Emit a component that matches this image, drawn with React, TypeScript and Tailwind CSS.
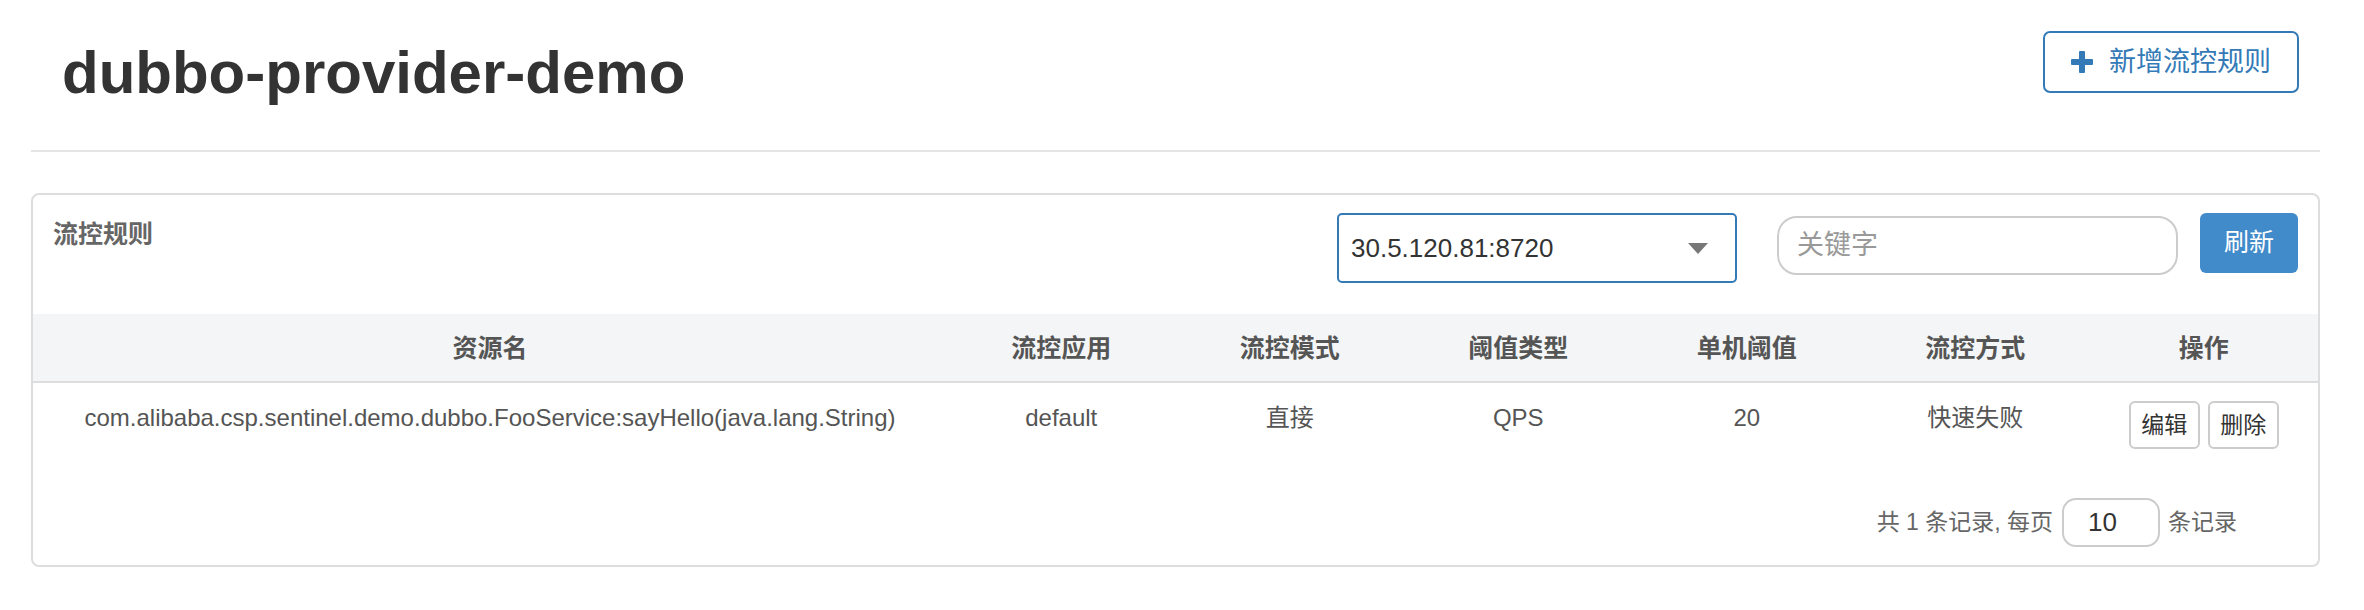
const columns = ["资源名", "流控应用", "流控模式", "阈值类型", "单机阈值", "流控方式", "操作"];

const rule = {
  resource: "com.alibaba.csp.sentinel.demo.dubbo.FooService:sayHello(java.lang.String)",
  app: "default",
  mode: "直接",
  grade: "QPS",
  count: "20",
  behavior: "快速失败",
};

const PlusIcon = () => (
  <svg width="22" height="22" viewBox="0 0 22 22" fill="#337ab7">
    <rect x="8" y="0" width="6" height="22" rx="1" />
    <rect x="0" y="8" width="22" height="6" rx="1" />
  </svg>
);

export default function App() {
  return (
    <div className="min-h-[610px] bg-white pl-[31px] pr-[44px] font-['Liberation_Sans','Noto_Sans_CJK_SC',sans-serif]">
      {/* page header */}
      <div className="h-[150px] flex justify-between items-start">
        <h1 className="mt-[43px] ml-[31px] text-[60px] leading-[60px] font-bold text-[#333]">
          dubbo-provider-demo
        </h1>
        <button className="mt-[31px] mr-[21px] h-[62px] w-[256px] border-2 border-[#337ab7] rounded-[7px] flex items-center justify-center gap-[16px] text-[27px] text-[#337ab7] bg-white">
          <PlusIcon />
          <span>新增流控规则</span>
        </button>
      </div>
      <div className="h-[2px] bg-[#e5e5e5]" />

      {/* rules card */}
      <div className="mt-[41px] border-2 border-[#ddd] rounded-[8px]">
        <div className="h-[119px] flex justify-between pl-[20px] pr-[20px]">
          <div className="mt-[24px] text-[25px] leading-[30px] font-bold text-[#666]">流控规则</div>
          <div className="flex items-start">
            <div className="mt-[18px] w-[400px] h-[70px] border-2 border-[#337ab7] rounded-[5px] flex items-center justify-between pl-[12px] pr-[27px] text-[26px] text-[#333]">
              <span>30.5.120.81:8720</span>
              <svg width="20" height="11" viewBox="0 0 20 11">
                <polygon points="0,0 20,0 10,11" fill="#777" />
              </svg>
            </div>
            <input
              type="text"
              placeholder="关键字"
              className="ml-[40px] mt-[21px] w-[401px] h-[59px] border-2 border-[#ccc] rounded-[20px] px-[18px] text-[27px] text-[#333] placeholder:text-[#999] outline-none"
            />
            <button className="ml-[22px] mt-[18px] w-[98px] h-[60px] rounded-[6px] bg-[#428bca] text-white text-[25px]">
              刷新
            </button>
          </div>
        </div>

        <div className="grid grid-cols-[914px_repeat(6,minmax(0,1fr))] h-[69px] pt-[3px] items-center bg-[#f4f5f7] border-b-2 border-[#ddd] text-center text-[25px] font-bold text-[#555]">
          {columns.map((c) => (
            <div key={c}>{c}</div>
          ))}
        </div>

        <div className="grid grid-cols-[914px_repeat(6,minmax(0,1fr))] h-[87px] items-start text-center text-[24px] leading-[28px] text-[#555]">
          <div className="pt-[21px]">{rule.resource}</div>
          <div className="pt-[21px]">{rule.app}</div>
          <div className="pt-[21px]">{rule.mode}</div>
          <div className="pt-[21px]">{rule.grade}</div>
          <div className="pt-[21px]">{rule.count}</div>
          <div className="pt-[21px]">{rule.behavior}</div>
          <div className="pt-[18px] flex justify-center gap-[8px]">
            <button className="w-[71px] h-[48px] border-2 border-[#ccc] rounded-[6px] bg-white text-[23px] text-[#333]">编辑</button>
            <button className="w-[71px] h-[48px] border-2 border-[#ccc] rounded-[6px] bg-white text-[23px] text-[#333]">删除</button>
          </div>
        </div>

        <div className="flex justify-end items-center pt-[28px] pb-[18px] pr-[81px] text-[23px] text-[#666]">
          <span>共 1 条记录, 每页</span>
          <input
            type="text"
            defaultValue="10"
            className="ml-[9px] w-[98px] h-[49px] border-2 border-[#ccc] rounded-[14px] pl-[24px] text-[26px] text-[#333] outline-none"
          />
          <span className="ml-[8px]">条记录</span>
        </div>
      </div>
    </div>
  );
}
